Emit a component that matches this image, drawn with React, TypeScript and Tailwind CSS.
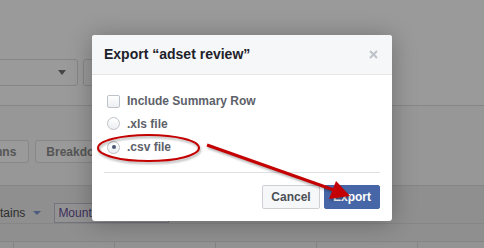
export default function App() {
  return (
    <div className="relative h-[248px] w-[484px] overflow-hidden bg-[#9a9a9a] font-['Liberation_Sans',Arial,sans-serif]">
      {/* dimmed page behind the dialog */}
      <div className="flex h-full flex-col">
        <div className="h-[59px] shrink-0" />
        <div className="flex h-[27px] shrink-0 gap-[5px]">
          <div className="-ml-[12px] flex w-[90px] items-center justify-end rounded-[3px] border border-[#868686] pr-[11px]">
            <span className="h-0 w-0 border-x-[4px] border-t-[5px] border-x-transparent border-t-[#454545]" />
          </div>
          <div className="w-[140px] rounded-[3px] border border-[#868686]" />
        </div>
        <div className="h-[20px] shrink-0 border-b border-[#878787]" />
        <div className="flex h-[80px] shrink-0 items-start gap-[6px] border-b border-[#858585] bg-[#979797] pt-[34px]">
          <div className="-ml-[48px] flex h-[23px] items-center rounded-[3px] border border-[#878787] bg-[#9a9a9a] px-[12px] text-[12px] font-bold text-[#555]">
            Columns
          </div>
          <div className="flex h-[23px] items-center rounded-[3px] border border-[#878787] bg-[#9a9a9a] px-[10px] text-[12px] font-bold text-[#555]">
            Breakdown
          </div>
        </div>
        <div className="flex h-[38px] shrink-0 items-end border-b border-[#868686] bg-[#8f8f8f]">
          <div className="flex h-[20px] items-center">
            <span className="-ml-[22px] text-[12px] text-[#2e2e2e]">Contains</span>
            <span className="ml-[8px] h-0 w-0 border-x-[4px] border-t-[4px] border-x-transparent border-t-[#4c5b80]" />
            <div className="ml-[13px] flex h-[20px] w-[115px] items-center border border-[#74747e] bg-[#939393] pl-[3px] text-[12px] text-[#3d2f5c]">
              Mountain
            </div>
          </div>
        </div>
        <div className="h-[18px] shrink-0 border-b border-[#858585] bg-[#8f8f8f]" />
        <div className="flex flex-1 bg-[#939393] pl-[13px]">
          {[0, 1, 2, 3, 4].map((i) => (
            <div key={i} className="w-[101px] shrink-0 border-l border-[#848484]" />
          ))}
        </div>
      </div>

      {/* export dialog */}
      <div className="absolute left-[92px] top-[35px] flex h-[186px] w-[300px] flex-col rounded-[3px] bg-white shadow-[0_2px_24px_rgba(0,0,0,0.28)]">
        <div className="flex h-[40px] shrink-0 items-center justify-between rounded-t-[3px] border-b border-[#e5e5e5] bg-[#f6f7f9] pl-[12px] pr-[14px]">
          <span className="text-[14px] font-bold text-[#1d2129]">Export “adset review”</span>
          <svg width="9" height="9" viewBox="0 0 9 9">
            <path d="M1 1 L8 8 M8 1 L1 8" stroke="#bec2c9" strokeWidth="2" />
          </svg>
        </div>
        <div className="flex flex-col px-[12px] pt-[15px]">
          <label className="flex h-[22px] items-center gap-[7px] pl-[3px] text-[12px] font-bold text-[#5d6169]">
            <span className="h-[13px] w-[13px] rounded-[2px] border border-[#bec3c9] bg-gradient-to-b from-white to-[#eceef1]" />
            Include Summary Row
          </label>
          <label className="flex h-[23px] items-center gap-[7px] pl-[3px] text-[12px] font-bold text-[#5d6169]">
            <span className="h-[13px] w-[13px] rounded-full border border-[#bec3c9] bg-gradient-to-b from-white to-[#eceef1]" />
            .xls file
          </label>
          <label className="flex h-[24px] items-center gap-[7px] pl-[3px] text-[12px] font-bold text-[#5d6169]">
            <span className="flex h-[13px] w-[13px] items-center justify-center rounded-full border border-[#bec3c9] bg-gradient-to-b from-white to-[#eceef1]">
              <span className="h-[4px] w-[4px] rounded-full bg-[#4b5670]" />
            </span>
            .csv file
          </label>
          <div className="mt-[13px] h-px bg-[#dddfe2]" />
          <div className="flex justify-end gap-[4px] pt-[12px]">
            <button
              type="button"
              className="flex h-[24px] w-[58px] items-center justify-center rounded-[2px] border border-[#ced0d4] bg-[#f6f7f9] text-[12px] font-bold text-[#4b4f56]"
            >
              Cancel
            </button>
            <button
              type="button"
              className="flex h-[24px] w-[56px] items-center justify-center rounded-[2px] border border-[#4766a8] bg-[#4766a8] text-[12px] font-bold text-white"
            >
              Export
            </button>
          </div>
        </div>
      </div>

      {/* red annotation */}
      <svg
        className="pointer-events-none absolute left-0 top-0 drop-shadow-[1px_2px_1px_rgba(0,0,0,0.3)]"
        width="484"
        height="248"
        viewBox="0 0 484 248"
      >
        <ellipse cx="148.5" cy="148" rx="50.5" ry="13" fill="none" stroke="#c40000" strokeWidth="2" />
        <line x1="207" y1="145" x2="334" y2="190" stroke="#c40000" strokeWidth="3" />
        <polygon points="350,196 336,181 329,199" fill="#c40000" />
      </svg>
    </div>
  );
}
